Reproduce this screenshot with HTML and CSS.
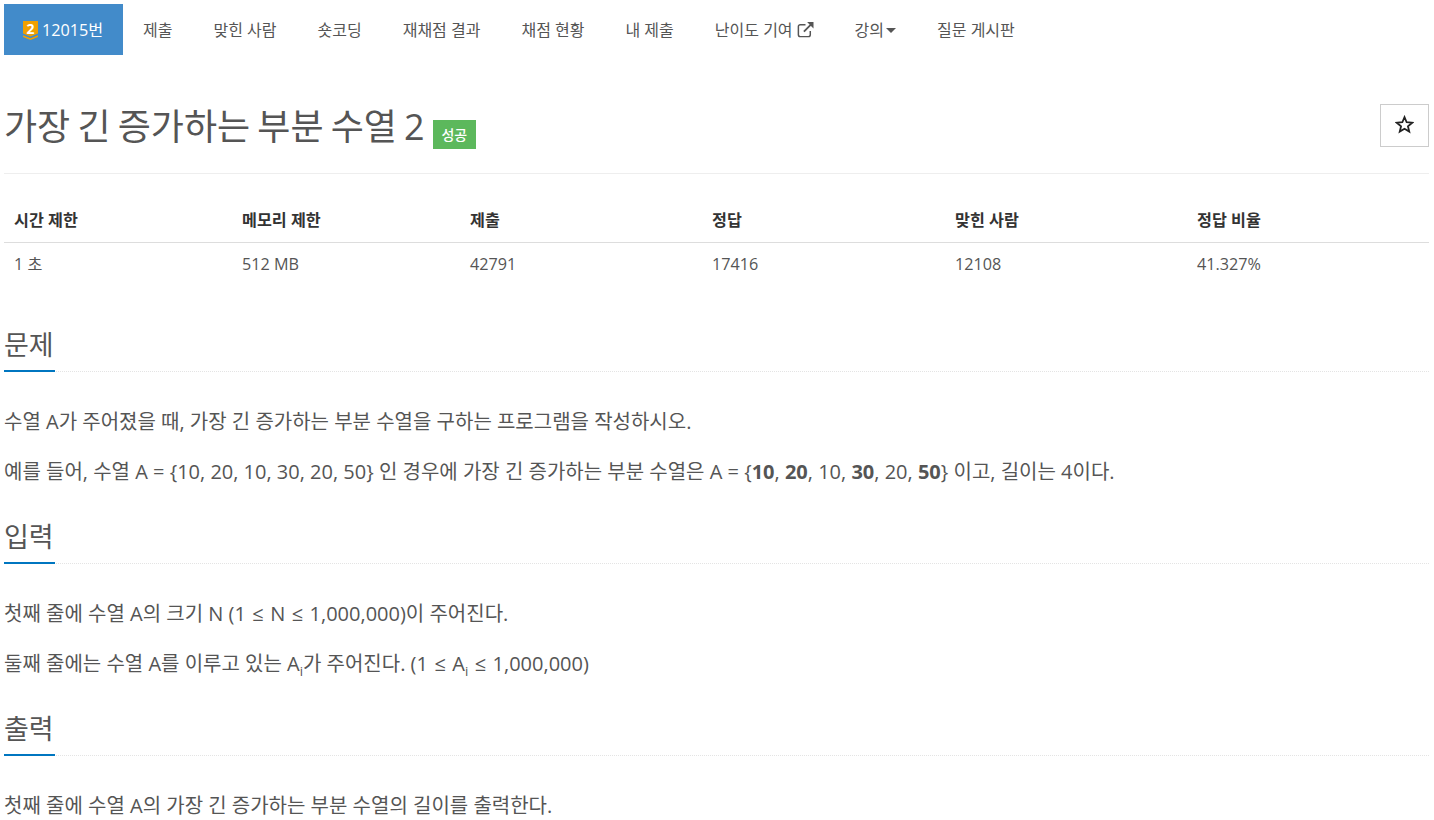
FILE: index.html
```html
<!DOCTYPE html>
<html lang="ko">
<head>
<meta charset="utf-8">
<title>가장 긴 증가하는 부분 수열 2</title>
<link rel="stylesheet" href="styles.css">
</head>
<body>
<div class="page">
  <nav class="tabs">
    <a class="tab tab-active">
      <svg class="tier" viewBox="0 0 15 19" aria-hidden="true"><path fill="#f0a000" d="M0 0H15V12.500L7.500 15.500 0 12.500Z"/><path fill="#f0a000" d="M0 14.200L7.500 17.200 15 14.200V16L7.500 19 0 16Z"/><text x="7.500" y="12.500" class="tier-num">2</text></svg>
      <span>12015번</span>
    </a>
    <a class="tab">제출</a>
    <a class="tab">맞힌 사람</a>
    <a class="tab">숏코딩</a>
    <a class="tab">재채점 결과</a>
    <a class="tab">채점 현황</a>
    <a class="tab">내 제출</a>
    <a class="tab">난이도 기여
      <svg class="ext" viewBox="0 0 16 16" aria-hidden="true"><path fill="none" stroke="currentColor" stroke-width="1.4" d="M12.5 9.5V13a1.7 1.7 0 0 1-1.7 1.7H3A1.7 1.7 0 0 1 1.300 13V5.200A1.700 1.700 0 0 1 3 3.500H8"/><path fill="none" stroke="currentColor" stroke-width="1.700" d="M6.500 10L14 2.500"/><path fill="currentColor" d="M9.500 1H15.500V7Z"/></svg>
    </a>
    <a class="tab">강의<span class="caret"></span></a>
    <a class="tab">질문 게시판</a>
  </nav>

  <header class="page-header">
    <h1 class="title">가장 긴 증가하는 부분 수열 2 <span class="label">성공</span></h1>
    <button class="star-btn" aria-label="즐겨찾기">
      <svg class="star" viewBox="0 0 16 16" aria-hidden="true"><path fill="none" stroke="#222" stroke-width="1.500" d="M8 1.800L9.800 6.100 14.500 6.500 10.900 9.500 12 14 8 11.600 4 14 5.100 9.500 1.500 6.500 6.200 6.100Z"/></svg>
    </button>
  </header>

  <table class="stats">
    <thead>
      <tr><th class="c1">시간 제한</th><th class="c2">메모리 제한</th><th class="c3">제출</th><th class="c4">정답</th><th class="c5">맞힌 사람</th><th>정답 비율</th></tr>
    </thead>
    <tbody>
      <tr><td>1 초</td><td>512 MB</td><td>42791</td><td>17416</td><td>12108</td><td>41.327%</td></tr>
    </tbody>
  </table>

  <section class="section section-first">
    <div class="headline"><h2>문제</h2></div>
    <p>수열 A가 주어졌을 때, 가장 긴 증가하는 부분 수열을 구하는 프로그램을 작성하시오.</p>
    <p>예를 들어, 수열 A = {10, 20, 10, 30, 20, 50} 인 경우에 가장 긴 증가하는 부분 수열은 A = {<b>10</b>, <b>20</b>, 10, <b>30</b>, 20, <b>50</b>} 이고, 길이는 4이다.</p>
  </section>
  <section class="section">
    <div class="headline"><h2>입력</h2></div>
    <p>첫째 줄에 수열 A의 크기 N (1 <span class="le">≤</span> N <span class="le">≤</span> 1,000,000)이 주어진다.</p>
    <p>둘째 줄에는 수열 A를 이루고 있는 A<sub>i</sub>가 주어진다. (1 <span class="le">≤</span> A<sub>i</sub> <span class="le">≤</span> 1,000,000)</p>
  </section>
  <section class="section">
    <div class="headline"><h2>출력</h2></div>
    <p>첫째 줄에 수열 A의 가장 긴 증가하는 부분 수열의 길이를 출력한다.</p>
  </section>
</div>
</body>
</html>
```
FILE: styles.css
```css
* { box-sizing: border-box; }
html, body { margin: 0; padding: 0; background: #fff; }
body {
  height: 820px;
  overflow: hidden;
  font-family: "Open Sans", "Noto Sans CJK KR", sans-serif;
  font-size: 16px;
  line-height: 20px;
  color: #333;
}
.page { padding: 4px 5px 0 4px; }

.tabs { display: flex; align-items: stretch; height: 51px; }
.tab {
  display: flex;
  align-items: center;
  gap: 4px;
  padding: 0 20.5px;
  font-size: 16px;
  color: #555;
  white-space: nowrap;
}
.tab-active { background: #428bca; color: #fff; width: 118.500px; padding: 0 0 0 19px; gap: 4px; flex: none; }
.tab-active span { font-size: 16.200px; }
.tier { width: 15px; height: 19px; flex: none; margin-top: 1px; overflow: visible; }
.tier-num { font: 700 14px/14px "Open Sans", sans-serif; fill: #fff; text-anchor: middle; }
.ext { width: 17px; height: 17px; margin-top: -1px; }
.caret {
  width: 0; height: 0;
  margin-left: -2px;
  margin-top: 2px;
  border-top: 5px solid #555;
  border-left: 5px solid transparent;
  border-right: 5px solid transparent;
}

.page-header {
  display: flex;
  justify-content: space-between;
  align-items: flex-start;
  margin-top: 49px;
  height: 70px;
  border-bottom: 1px solid #eee;
}
.title {
  margin: 0;
  padding-top: 3px;
  font-size: 36px;
  word-spacing: -2.200px;
  line-height: 40px;
  font-weight: 400;
  color: #555;
}
.label {
  display: inline-block;
  padding: 0 8.600px;
  height: 29px;
  line-height: 29px;
  font-size: 14px;
  word-spacing: 0;
  font-weight: 500;
  color: #fff;
  background: #5cb85c;
  vertical-align: 0;
  margin-left: 1px;
}
.star-btn {
  display: flex;
  align-items: center;
  justify-content: center;
  width: 49px;
  height: 43px;
  padding: 0 0 3px;
  border: 1px solid #ccc;
  background: #fff;
}
.star { width: 19px; height: 19px; }

.stats { width: 100%; border-collapse: collapse; table-layout: fixed; margin-top: 24px; }
.stats th, .stats td { padding: 10px; text-align: left; font-size: 16.200px; }
.stats th { height: 44px; font-weight: 700; color: #333; border-bottom: 1px solid #ddd; }
.stats td { height: 43px; color: #555; }
.c1, .c2 { width: 228px; }
.c3 { width: 242px; }
.c4 { width: 243px; }
.c5 { width: 242px; }

.section { margin-top: 0; }
.section-first { margin-top: 31px; }
.headline {
  height: 56px;
  border-bottom: 1px dotted #e4e4e4;
  margin-bottom: 36px;
}
.headline h2 {
  display: inline-block;
  margin: 0;
  height: 56px;
  min-width: 51px;
  padding-top: 13px;
  font-size: 27px;
  line-height: 32px;
  font-weight: 400;
  color: #555;
  border-bottom: 2px solid #0076c0;
}
.section p {
  margin: 0 0 22px;
  font-size: 20px;
  line-height: 28px;
  color: #555;
}
.section sub { font-size: 13px; line-height: 0; }
.le { margin: 0 1.250px; }
```
